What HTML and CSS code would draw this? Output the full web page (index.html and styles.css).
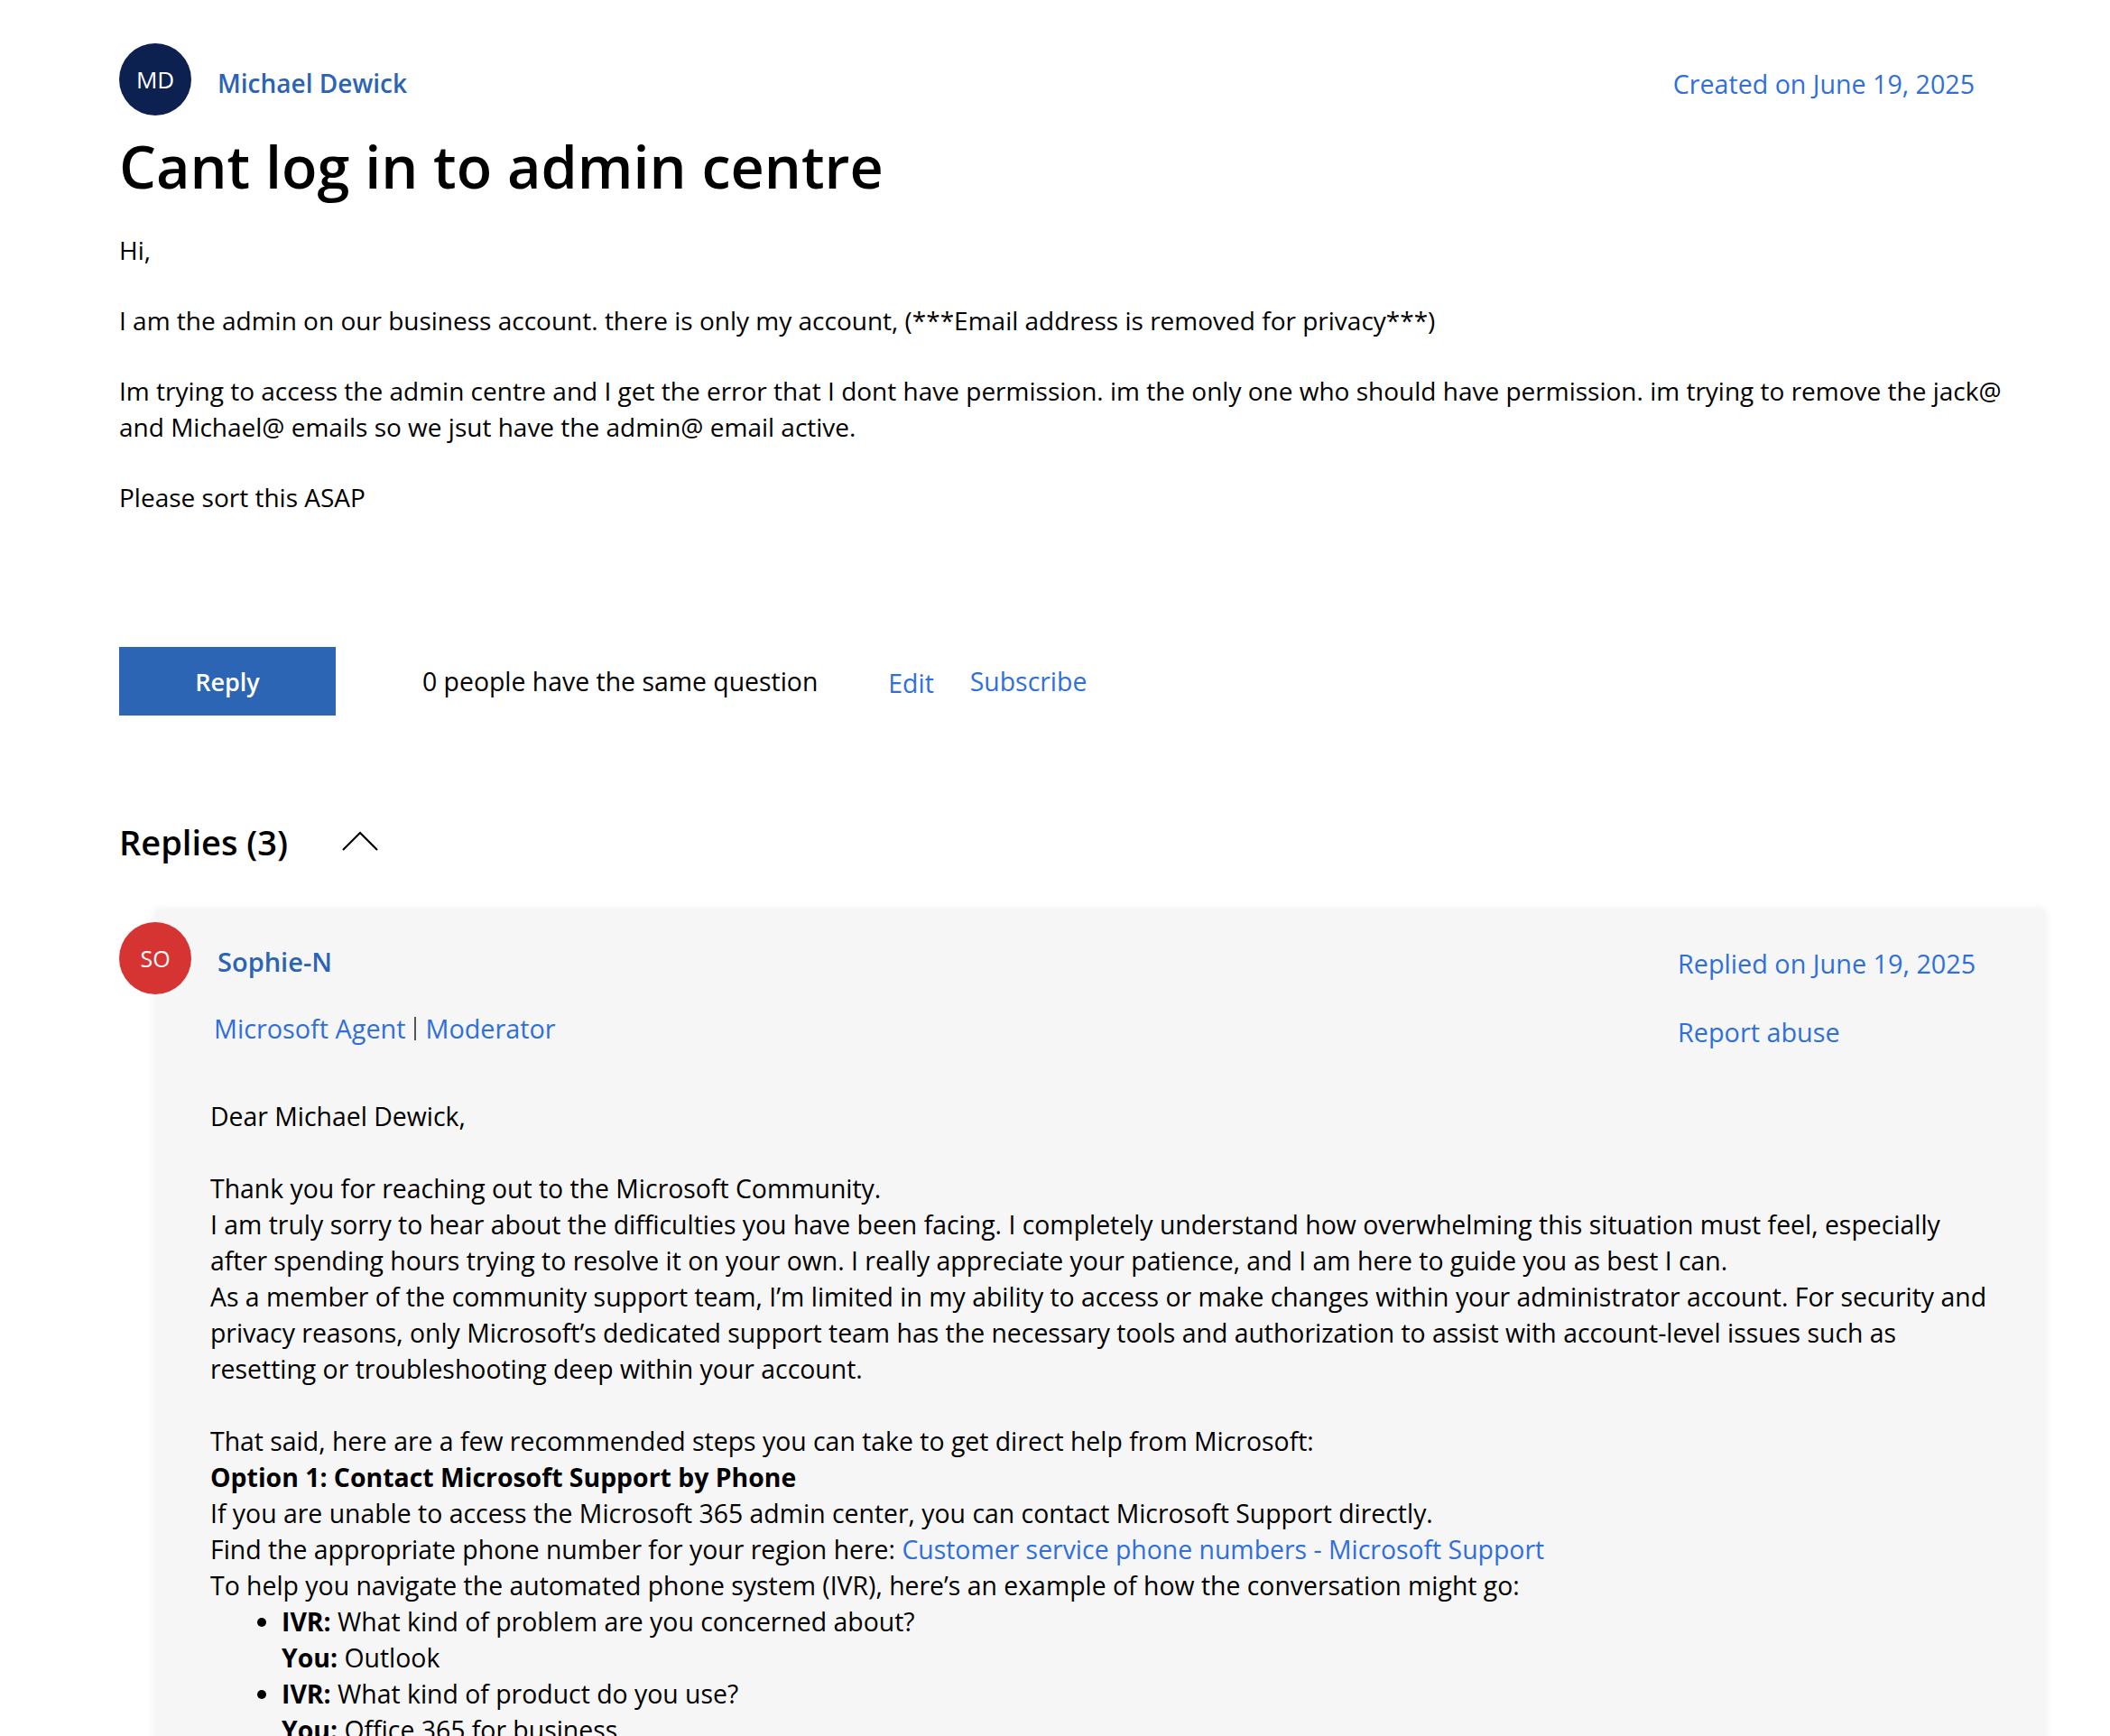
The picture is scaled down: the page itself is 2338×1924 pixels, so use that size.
FILE: index.html
```html
<!DOCTYPE html>
<html lang="en">
<head>
<meta charset="utf-8">
<title>Cant log in to admin centre</title>
<link rel="stylesheet" href="styles.css">
</head>
<body>
<main class="page">
  <header class="post-head">
    <div class="avatar avatar-md">MD</div>
    <a class="author" href="#">Michael Dewick</a>
    <span class="created">Created on June 19, 2025</span>
  </header>
  <h1 class="title">Cant log in to admin centre</h1>
  <div class="post-body">
    <p>Hi,</p>
    <p>I am the admin on our business account. there is only my account, (***Email address is removed for privacy***)</p>
    <p>Im trying to access the admin centre and I get the error that I dont have permission. im the only one who should have permission. im trying to remove the jack@ and Michael@ emails so we jsut have the admin@ email active.</p>
    <p>Please sort this ASAP</p>
  </div>
  <div class="actions">
    <button class="btn-reply">Reply</button>
    <span class="same-q">0 people have the same question</span>
    <a class="act-edit" href="#">Edit</a>
    <a class="act-sub" href="#">Subscribe</a>
  </div>
  <div class="replies-head">
    <h2>Replies (3)</h2>
    <svg class="chev" width="40" height="22" viewBox="0 0 40 22"><path d="M1 21 L20 2 L39 21" fill="none" stroke="#000" stroke-width="2.2"/></svg>
  </div>
  <section class="reply">
    <div class="reply-card">
      <div class="reply-head">
        <div class="reply-who">
          <div class="who-row">
            <div class="avatar avatar-so">SO</div>
            <a class="author" href="#">Sophie-N</a>
          </div>
          <div class="roles"><a href="#">Microsoft Agent</a><span class="sep"></span><a href="#">Moderator</a></div>
        </div>
        <div class="reply-meta">
          <span class="replied">Replied on June 19, 2025</span>
          <a class="report" href="#">Report abuse</a>
        </div>
      </div>
      <div class="reply-body">
        <p class="gap">Dear Michael Dewick,</p>
        <p>Thank you for reaching out to the Microsoft Community.</p>
        <p>I am truly sorry to hear about the difficulties you have been facing. I completely understand how overwhelming this situation must feel, especially after spending hours trying to resolve it on your own. I really appreciate your patience, and I am here to guide you as best I can.</p>
        <p class="gap">As a member of the community support team, I’m limited in my ability to access or make changes within your administrator account. For security and privacy reasons, only Microsoft’s dedicated support team has the necessary tools and authorization to assist with account-level issues such as resetting or troubleshooting deep within your account.</p>
        <p>That said, here are a few recommended steps you can take to get direct help from Microsoft:</p>
        <p><strong>Option 1: Contact Microsoft Support by Phone</strong></p>
        <p>If you are unable to access the Microsoft 365 admin center, you can contact Microsoft Support directly.</p>
        <p>Find the appropriate phone number for your region here: <a href="#">Customer service phone numbers - Microsoft Support</a></p>
        <p>To help you navigate the automated phone system (IVR), here’s an example of how the conversation might go:</p>
        <ul>
          <li><strong>IVR:</strong> What kind of problem are you concerned about?<br><strong>You:</strong> Outlook</li>
          <li><strong>IVR:</strong> What kind of product do you use?<br><strong>You:</strong> Office 365 for business</li>
        </ul>
      </div>
    </div>
  </section>
</main>
</body>
</html>
```

FILE: styles.css
```css
* { box-sizing: border-box; }
body {
  margin: 0;
  background: #fff;
  color: #000;
  font-family: "Open Sans", "Noto Sans", sans-serif;
}
a { text-decoration: none; }
.page {
  width: 2134px;
  margin-left: 132px;
  padding-top: 48px;
}
.post-head {
  display: flex;
  align-items: center;
  padding-right: 78px;
}
.avatar {
  flex: none;
  width: 80px;
  height: 80px;
  border-radius: 50%;
  display: flex;
  align-items: center;
  justify-content: center;
  color: #fff;
  font-size: 26px;
}
.avatar-md { background: #0d2150; }
.avatar-so { background: #d63333; font-size: 25px; }
.author {
  margin-left: 29px;
  padding-top: 7px;
  font-size: 28px;
  font-weight: 600;
  color: #2b63b5;
}
.created {
  margin-left: auto;
  padding-top: 8px;
  font-size: 28.6px;
  color: #2f6fdc;
}
.title {
  margin: 16px 0 0;
  font-size: 64.7px;
  line-height: 80px;
  font-weight: 600;
}
.post-body {
  margin-top: 33px;
  font-size: 28px;
  line-height: 40px;
}
.post-body p { margin: 0 0 38px; }
.actions {
  margin-top: 146px;
  display: flex;
  align-items: center;
  height: 76px;
}
.btn-reply {
  width: 240px;
  height: 76px;
  border: 0;
  background: #2b65b3;
  color: #fff;
  font-family: inherit;
  font-size: 27px;
  font-weight: 600;
}
.same-q { margin-left: 96px; font-size: 28.4px; }
.act-edit { margin-left: 78px; font-size: 28.4px; color: #2f6fdc; padding-top: 3px; }
.act-sub { margin-left: 40px; font-size: 28.4px; color: #2f6fdc; }
.replies-head {
  margin-top: 115px;
  display: flex;
  align-items: center;
  gap: 60px;
}
.replies-head h2 {
  margin: 0;
  font-size: 38px;
  font-weight: 600;
  line-height: 50px;
}
.chev { margin-top: -2px; }
.reply { margin-top: 50px; }
.reply-card {
  margin-left: 40px;
  background: #f6f6f6;
  box-shadow: 0 0 10px rgba(0, 0, 0, 0.07);
  padding: 14px 55px 40px 61px;
}
.reply-head {
  display: flex;
  justify-content: space-between;
  margin-left: -101px;
  padding-right: 22px;
}
.who-row { display: flex; align-items: center; }
.who-row .author { font-size: 29px; }
.roles {
  margin: 18px 0 0 105px;
  font-size: 28.8px;
  display: flex;
  align-items: center;
}
.roles a { color: #2f6fdc; }
.sep {
  width: 2px;
  height: 26px;
  background: #555;
  margin: 0 10px;
}
.reply-meta {
  display: flex;
  flex-direction: column;
  padding-top: 26px;
  width: 330px;
}
.replied { font-size: 28.8px; color: #2f6fdc; white-space: nowrap; }
.report { margin-top: 37px; font-size: 28.8px; color: #2f6fdc; }
.reply-body {
  margin-top: 54px;
  font-size: 28.4px;
  line-height: 40px;
}
.reply-body p { margin: 0; }
.reply-body p.gap { margin-bottom: 40px; }
.reply-body a { color: #2f6fdc; }
.reply-body ul { margin: 0; padding-left: 79px; }
```
